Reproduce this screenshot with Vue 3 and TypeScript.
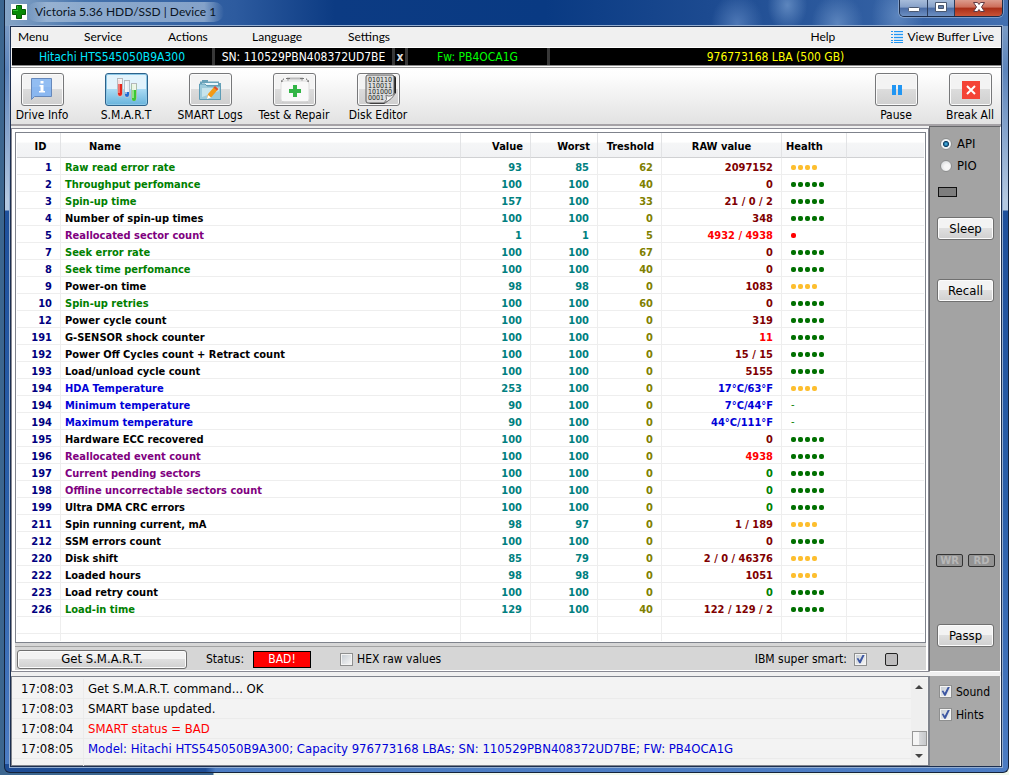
<script setup lang="ts">
import { ref } from 'vue'

type Tone = 'green' | 'black' | 'purple' | 'blue'
type RawTone = 'maroon' | 'red' | 'blue' | 'green'

interface Attribute {
  id: number
  name: string
  tone: Tone
  value: number
  worst: number
  threshold: number
  raw: string
  rawTone: RawTone
  health: number
}

const attr = (
  id: number, name: string, tone: Tone, value: number, worst: number,
  threshold: number, raw: string, rawTone: RawTone, health: number,
): Attribute => ({ id, name, tone, value, worst, threshold, raw, rawTone, health })

const attributes: Attribute[] = [
  attr(1, 'Raw read error rate', 'green', 93, 85, 62, '2097152', 'maroon', 4),
  attr(2, 'Throughput perfomance', 'green', 100, 100, 40, '0', 'maroon', 5),
  attr(3, 'Spin-up time', 'green', 157, 100, 33, '21 / 0 / 2', 'maroon', 5),
  attr(4, 'Number of spin-up times', 'black', 100, 100, 0, '348', 'maroon', 5),
  attr(5, 'Reallocated sector count', 'purple', 1, 1, 5, '4932 / 4938', 'red', 1),
  attr(7, 'Seek error rate', 'green', 100, 100, 67, '0', 'maroon', 5),
  attr(8, 'Seek time perfomance', 'green', 100, 100, 40, '0', 'maroon', 5),
  attr(9, 'Power-on time', 'black', 98, 98, 0, '1083', 'maroon', 4),
  attr(10, 'Spin-up retries', 'green', 100, 100, 60, '0', 'maroon', 5),
  attr(12, 'Power cycle count', 'black', 100, 100, 0, '319', 'maroon', 5),
  attr(191, 'G-SENSOR shock counter', 'black', 100, 100, 0, '11', 'red', 5),
  attr(192, 'Power Off Cycles count + Retract count', 'black', 100, 100, 0, '15 / 15', 'maroon', 5),
  attr(193, 'Load/unload cycle count', 'black', 100, 100, 0, '5155', 'maroon', 5),
  attr(194, 'HDA Temperature', 'blue', 253, 100, 0, '17°C/63°F', 'blue', 4),
  attr(194, 'Minimum temperature', 'blue', 90, 100, 0, '7°C/44°F', 'blue', 0),
  attr(194, 'Maximum temperature', 'blue', 90, 100, 0, '44°C/111°F', 'blue', 0),
  attr(195, 'Hardware ECC recovered', 'black', 100, 100, 0, '0', 'maroon', 5),
  attr(196, 'Reallocated event count', 'purple', 100, 100, 0, '4938', 'red', 5),
  attr(197, 'Current pending sectors', 'purple', 100, 100, 0, '0', 'green', 5),
  attr(198, 'Offline uncorrectable sectors count', 'purple', 100, 100, 0, '0', 'green', 5),
  attr(199, 'Ultra DMA CRC errors', 'black', 100, 100, 0, '0', 'green', 5),
  attr(211, 'Spin running current, mA', 'black', 98, 97, 0, '1 / 189', 'maroon', 4),
  attr(212, 'SSM errors count', 'black', 100, 100, 0, '0', 'maroon', 5),
  attr(220, 'Disk shift', 'black', 85, 79, 0, '2 / 0 / 46376', 'maroon', 4),
  attr(222, 'Loaded hours', 'black', 98, 98, 0, '1051', 'maroon', 4),
  attr(223, 'Load retry count', 'black', 100, 100, 0, '0', 'green', 5),
  attr(226, 'Load-in time', 'green', 129, 100, 40, '122 / 129 / 2', 'maroon', 5),
]

const log = [
  { time: '17:08:03', text: 'Get S.M.A.R.T. command... OK', tone: 'black' },
  { time: '17:08:03', text: 'SMART base updated.', tone: 'black' },
  { time: '17:08:04', text: 'SMART status = BAD', tone: 'red' },
  { time: '17:08:05', text: 'Model: Hitachi HTS545050B9A300; Capacity 976773168 LBAs; SN: 110529PBN408372UD7BE; FW: PB4OCA1G', tone: 'blue' },
]

const menus = ['Menu', 'Service', 'Actions', 'Language', 'Settings', 'Help']
const mode = ref<'API' | 'PIO'>('API')
const hex = ref(false)
const superSmart = ref(true)
const sound = ref(true)
const hints = ref(true)
</script>

<template>
  <div class="desktop">
    <div class="window">
      <header class="titlebar">
        <svg class="logo" viewBox="0 0 16 16" aria-hidden="true">
          <path d="M0 0H16V16H0z" fill="#fff" />
          <path d="M5.500 1.500h5v4h4v5h-4v4h-5v-4h-4v-5h4z" fill="#078a07" stroke="#045c04" />
          <path d="M6 2h1v4H2v1h5z" fill="#35c235" />
        </svg>
        <h1 class="title">Victoria 5.36 HDD/SSD | Device 1</h1>
        <div class="winbuttons">
          <button class="wb min" type="button" aria-label="Minimize">
            <svg viewBox="0 0 14 12"><rect x="1.500" y="6.500" width="11" height="4" rx="1" fill="#fff" stroke="#4a5870" /></svg>
          </button>
          <button class="wb max" type="button" aria-label="Maximize">
            <svg viewBox="0 0 14 12"><path d="M1.500 1.500h11v9h-11z" fill="#fff" stroke="#4a5870" /><path d="M4.500 4.500h5v3h-5z" fill="#6580aa" stroke="#4a5870" /></svg>
          </button>
          <button class="wb close" type="button" aria-label="Close">
            <svg viewBox="0 0 14 12"><path d="M1.500 1.500h4L7 3.500l1.500-2h4L9.500 6l3 4.500h-4L7 8.500l-1.500 2h-4L4.500 6z" fill="#fff" stroke="#613a43" /></svg>
          </button>
        </div>
      </header>

      <div class="client">
        <nav class="menubar">
          <button v-for="m in menus" :key="m" type="button" class="menu">{{ m }}</button>
          <button type="button" class="menu live">
            <svg viewBox="0 0 12 12" aria-hidden="true"><path d="M0 .5h2M3 .5h9M0 3.500h2M3 3.500h9M0 6.500h2M3 6.500h9M0 9.500h2M3 9.500h9M0 11.500h2M3 11.500h9" stroke="#2196f3" /><path d="M3 2h9M3 5h9M3 8h9" stroke="#a8d6fb" /></svg>
            View Buffer Live
          </button>
        </nav>

        <div class="strip">
          <span class="cell model">Hitachi HTS545050B9A300</span>
          <span class="cell serial">SN: 110529PBN408372UD7BE</span>
          <button class="cell clear" type="button">x</button>
          <span class="cell fw">Fw: PB4OCA1G</span>
          <span class="cell lba">976773168 LBA (500 GB)</span>
        </div>

        <div class="toolbar">
          <button class="tool" type="button">
            <span class="face">
              <svg viewBox="0 0 41 31"><path d="M9.500 4.500h20v18h-17l-3 3z" fill="#8ab7f0" stroke="#6688bb" /><path d="M10 5h19v8H10z" fill="#92bdf2" /><path d="M18.500 7h3v2.500h-3zM17.500 11h4v6h1.500v1.500h-6V17h1.500v-4.500h-1z" fill="#fff" /></svg>
            </span>
            <span class="caption">Drive Info</span>
          </button>
          <button class="tool active" type="button">
            <span class="face">
              <svg viewBox="0 0 41 31">
                <path d="M11.500 5v15a2.500 2.500 0 0 0 5 0V5" fill="#f5f5f5" stroke="#b9bec3" /><path d="M12 10h4v10a2 2 0 0 1-4 0z" fill="#e8251c" /><path d="M13 6v13" stroke="#fbc5c5" />
                <path d="M18.500 7v14a2.500 2.500 0 0 0 5 0V7" fill="#e9eff5" stroke="#b3bfcc" /><path d="M19 18h4v3a2 2 0 0 1-4 0z" fill="#1f6bd4" /><path d="M20 8v12" stroke="#fff" />
                <path d="M25.500 10v14a2.500 2.500 0 0 0 5 0V10" fill="#eff5e9" stroke="#a8bfa8" /><path d="M26 16h4v9a2 2 0 0 1-4 0z" fill="#3cc832" /><path d="M27 11v13" stroke="#e0fad9" />
                <path d="M11 4.500h6M18 6.500h6M25 9.500h6" stroke="#b5b8bc" />
              </svg>
            </span>
            <span class="caption">S.M.A.R.T</span>
          </button>
          <button class="tool" type="button">
            <span class="face">
              <svg viewBox="0 0 41 31"><path d="M10 9V7.500h2V6h6v1.500h11V9h2v17H10z" fill="#69a2b9" /><path d="M12 12h17l1.500 1.500V24H12z" fill="#b4d9e5" /><path d="M12 9h16v2H12z" fill="#e7f5fa" /><path d="M9.500 10v15.500h21V12H17l-2-2z" fill="#9dcbdb" stroke="#5e9cb5" /><path d="M12 14h17v3L12 23z" fill="#c6e4ec" /><path d="M17 24l1-4 6-7 3.500 3-6 7z" fill="#f39a16" /><path d="M17 25l1-4 3 2.500z" fill="#fff" /><path d="M23.500 13.500l1.500-1.500 3.500 3-1.500 1.500z" fill="#de4e31" /></svg>
            </span>
            <span class="caption">SMART Logs</span>
          </button>
          <button class="tool" type="button">
            <span class="face">
              <svg viewBox="0 0 41 31"><path d="M14 7V4.500h14V7" fill="none" stroke="#bbb" stroke-width="2" /><rect x="7" y="7" width="28" height="21" rx="3" fill="#f9f9f9" stroke="#ddd" /><path d="M12 4.500h4M26 4.500h4" stroke="#777" /><path d="M8 8q-1-2 2-3M34 8q1-2-2-3" stroke="#444" stroke-dasharray="2 1" fill="none" /><path d="M19 11h4v4h4v4h-4v4h-4v-4h-4v-4h4z" fill="#32b546" /><path d="M8 28h26" stroke="#c4c4c4" /></svg>
            </span>
            <span class="caption">Test &amp; Repair</span>
          </button>
          <button class="tool" type="button">
            <span class="face">
              <svg viewBox="0 0 41 31"><path d="M12 2h24q2 0 2 2v15L26 30H13q-2 0-2-2V4q0-2 2-2z" fill="#222" /><path d="M10 1h24q2 0 2 2v16q0 4-9 10H10q-2 0-2-2V3q0-2 2-2z" fill="#dcdcdc" stroke="#5c5c5c" /><text class="bits" x="10" y="8">010110</text><text class="bits" x="10" y="14">110011</text><text class="bits" x="10" y="20">101000</text><text class="bits" x="10" y="26">0001</text><path d="M26 29q4-3 2-8 4 3 9-2-2 6-11 10z" fill="#f5f5f5" stroke="#777" /></svg>
            </span>
            <span class="caption">Disk Editor</span>
          </button>
          <span class="grow"></span>
          <button class="tool" type="button">
            <span class="face">
              <svg viewBox="0 0 41 31"><path d="M16 11h4v10h-4zM22 11h4v10h-4z" fill="#2196f3" /></svg>
            </span>
            <span class="caption">Pause</span>
          </button>
          <button class="tool last" type="button">
            <span class="face">
              <svg viewBox="0 0 41 31"><path d="M12 7h18v18H12z" fill="#f44336" /><path d="M17 12l8 8M25 12l-8 8" stroke="#fff" stroke-width="2" /></svg>
            </span>
            <span class="caption">Break All</span>
          </button>
        </div>

        <div class="main">
          <section class="panel">
            <div class="sheet">
              <table class="smart">
                <colgroup>
                  <col class="c-id"><col class="c-name"><col class="c-value"><col class="c-worst">
                  <col class="c-threshold"><col class="c-raw"><col class="c-health"><col>
                </colgroup>
                <thead>
                  <tr>
                    <th class="h-id">ID</th>
                    <th class="h-name">Name</th>
                    <th class="h-num">Value</th>
                    <th class="h-num">Worst</th>
                    <th class="h-num">Treshold</th>
                    <th>RAW value</th>
                    <th class="h-health">Health</th>
                    <th></th>
                  </tr>
                </thead>
                <tbody>
                  <tr v-for="(a, i) in attributes" :key="i">
                    <td class="num navy">{{ a.id }}</td>
                    <td :class="a.tone">{{ a.name }}</td>
                    <td class="num teal">{{ a.value }}</td>
                    <td class="num teal">{{ a.worst }}</td>
                    <td class="num olive">{{ a.threshold }}</td>
                    <td class="num" :class="a.rawTone">{{ a.raw }}</td>
                    <td class="health">
                      <span v-if="a.health" class="dots" :class="{ warn: a.health === 4, bad: a.health === 1 }">
                        <i v-for="n in a.health" :key="n"></i>
                      </span>
                      <span v-else class="none">-</span>
                    </td>
                    <td></td>
                  </tr>
                  <tr><td v-for="n in 8" :key="n"></td></tr>
                  <tr class="tail"><td v-for="n in 8" :key="n"></td></tr>
                </tbody>
              </table>
            </div>
            <div class="statusbar">
              <button class="btn get" type="button">Get S.M.A.R.T.</button>
              <span class="status-label">Status:</span>
              <strong class="bad-flag">BAD!</strong>
              <label class="check hex"><input v-model="hex" type="checkbox">HEX raw values</label>
              <span class="grow"></span>
              <label class="check">IBM super smart:<input v-model="superSmart" type="checkbox"></label>
              <span class="lamp"></span>
            </div>
          </section>

          <aside class="side">
            <label class="radio"><input v-model="mode" type="radio" name="mode" value="API">API</label>
            <label class="radio"><input v-model="mode" type="radio" name="mode" value="PIO">PIO</label>
            <span class="led"></span>
            <button class="btn sleep" type="button">Sleep</button>
            <button class="btn recall" type="button">Recall</button>
            <div class="rw"><span>WR</span><span>RD</span></div>
            <button class="btn passp" type="button">Passp</button>
          </aside>
        </div>

        <div class="bottom">
          <section class="log">
            <table class="entries">
              <tbody>
                <tr v-for="(l, i) in log" :key="i">
                  <td class="time">{{ l.time }}</td>
                  <td :class="l.tone">{{ l.text }}</td>
                </tr>
                <tr class="rest"><td class="time"></td><td></td></tr>
              </tbody>
            </table>
            <div class="scroll">
              <svg viewBox="0 0 8 5"><path d="M4 0l4 4H0z" fill="#444" /></svg>
              <span class="thumb"></span>
              <svg viewBox="0 0 8 5"><path d="M4 4L0 0h8z" fill="#444" /></svg>
            </div>
          </section>
          <aside class="options">
            <label class="check"><input v-model="sound" type="checkbox">Sound</label>
            <label class="check"><input v-model="hints" type="checkbox">Hints</label>
          </aside>
        </div>
      </div>
    </div>
  </div>
</template>

<style>
body {
  margin: 0;
  background: #3c668f;
}
</style>

<style scoped>
* {
  box-sizing: border-box;
}
.desktop {
  min-height: 100vh;
  display: flex;
  padding: 0 0 2px 4px;
  font: 12px/16px "DejaVu Sans Condensed", "Noto Sans", sans-serif;
  color: #000;
  background: linear-gradient(90deg, #3c668f 213px, #f0f8ec 214px);
}
button {
  font: inherit;
  color: inherit;
  border: 0;
  padding: 0;
  background: none;
  white-space: nowrap;
}
.grow {
  flex: 1;
}
.window {
  flex: 1;
  min-width: 0;
  display: flex;
  flex-direction: column;
  border: 1px solid #14233c;
  border-top: 0;
  border-radius: 0 0 6px 6px;
  padding: 0 6px 5px 5px;
  background:
    linear-gradient(90deg, #1e4c94 20%, transparent 21%) 0 100% / 100% 8px no-repeat,
    linear-gradient(#8ca8ca 0, #5c84bb 70px, #b4c8e0 200px, #b4c8e0 210px, #1f509b 211px, #2a5fa9 500px, #4c7cc3);
}
.titlebar {
  flex: none;
  height: 26px;
  margin: 0 -6px 0 -5px;
  padding: 0 5px;
  display: flex;
  align-items: flex-start;
  background:
    radial-gradient(ellipse 26px 30px at 73% 90%, #4d77b5 0, transparent 100%),
    radial-gradient(ellipse 20px 26px at 78% 20%, #5d86be 0, transparent 100%),
    radial-gradient(ellipse 26px 30px at 83% 90%, #5b84bd 0, transparent 100%),
    radial-gradient(ellipse 26px 36px at 89% 60%, #5b84bd 0, transparent 100%),
    linear-gradient(90deg, #86a5c6 0, #4673ac 80px, #2d5b9f 230px, #0c3b83 330px, #093a83 540px, #1c4a90 700px, #426fb0 100%);
}
.logo {
  width: 16px;
  height: 16px;
  margin: 4px 0 0 1px;
}
.title {
  margin: 2px 0 0;
  padding: 0 8px;
  font: 12px/20px Lato, "Noto Sans", sans-serif;
  color: #0a1424;
  white-space: nowrap;
  border-radius: 10px;
  background: linear-gradient(90deg, #b5c9e000, #b5c9e0a0 10%, #b5c9e0a0 90%, #b5c9e000);
}
.winbuttons {
  margin-left: auto;
  height: 17px;
  display: flex;
  border: 1px solid #1c2c49;
  border-top: 0;
  border-radius: 0 0 5px 5px;
  overflow: hidden;
  box-shadow: 0 0 0 1px #a9bedb90;
}
.wb {
  width: 28px;
  display: flex;
  justify-content: center;
  border-right: 1px solid #293c5c;
  background: linear-gradient(#a7bcda 0, #86a1c9 45%, #4a6ca5 50%, #6c8fc2 100%);
}
.wb svg {
  width: 14px;
  height: 12px;
  margin-top: 1px;
}
.max {
  width: 27px;
}
.close {
  width: 47px;
  border-right: 0;
  background: linear-gradient(#dc9c8d 0, #cd6d59 45%, #a82e18 50%, #c95336 100%);
}
.client {
  flex: 1;
  display: flex;
  flex-direction: column;
  border: 1px solid #1c2f50;
  background: #f0f0f0;
  box-shadow: 0 0 0 1px #93add0;
}
.menubar {
  display: grid;
  grid-template-columns: 66px 84px 84px 96px 1fr 81px auto;
  height: 21px;
  padding: 0 7px;
  border-bottom: 1px solid #fff;
  font: 12px/19px Lato, "Noto Sans", sans-serif;
}
.menu {
  text-align: left;
  line-height: 18px;
}
.live {
  display: flex;
  align-items: center;
  gap: 4px;
}
.live svg {
  width: 12px;
  height: 12px;
}
.strip {
  height: 18px;
  display: flex;
  margin-left: 1px;
  background: #000;
  line-height: 18px;
  border-bottom: 1px solid #8d8d8d;
}
.cell {
  text-align: center;
  white-space: nowrap;
  border-right: 3px solid #383838;
}
.model {
  width: 203px;
  color: #00e8ff;
}
.serial {
  width: 180px;
  color: #fff;
}
.clear {
  width: 13px;
  color: #ddd;
  font-weight: bold;
  line-height: 16px;
}
.fw {
  width: 142px;
  color: #0f0;
}
.lba {
  flex: 1;
  color: #ff0;
  border-right: 0;
}
.toolbar {
  display: flex;
  gap: 22px;
  height: 60px;
  padding-top: 6px;
  border-top: 1px solid #fff;
  border-bottom: 2px solid #a5a2a6;
  box-shadow: inset 0 1px #999;
  background: linear-gradient(#fff, #fdfdfd 15%, #e2e2e2);
}
.tool {
  width: 62px;
  display: flex;
  flex-direction: column;
  align-items: center;
}
.last {
  margin-left: -10px;
}
.face {
  width: 43px;
  height: 33px;
  border: 1px solid #77787a;
  border-radius: 3px;
  box-shadow: inset 0 0 0 1px #fbfbfb;
  background: linear-gradient(#f3f3f3 48%, #dcdcdc 50%, #cfcfcf);
}
.active .face {
  border-color: #2c628b;
  box-shadow: inset 0 0 0 1px #8cc7e6;
  background: linear-gradient(#e2f3fc 48%, #a9daf3 50%, #68b3dc);
}
.face svg {
  display: block;
  width: 41px;
  height: 31px;
}
.bits {
  font: 7px "DejaVu Sans Condensed", sans-serif;
  fill: #222;
}
.caption {
  margin-top: 1px;
}
.main {
  flex: 1;
  display: flex;
}
.panel {
  flex: 1;
  min-width: 0;
  margin-top: 2px;
  display: flex;
  flex-direction: column;
  padding: 3px 2px 1px 3px;
  border: 1px solid #888993;
  background: #fff;
}
.sheet {
  flex: 1;
  border: 1px solid #7f838c;
  padding: 0 1px;
  background: #fff;
}
.smart {
  width: 100%;
  table-layout: fixed;
  border-collapse: separate;
  border-spacing: 0;
  font: bold 11px/12px "DejaVu Sans Condensed", "Noto Sans", sans-serif;
}
.c-id { width: 44px; }
.c-name { width: 400px; }
.c-value { width: 70px; }
.c-worst { width: 67px; }
.c-threshold { width: 64px; }
.c-raw { width: 120px; }
.c-health { width: 65px; }
.smart th {
  height: 25px;
  padding: 4px 5px 0;
  border-right: 1px solid #e2e3e5;
  border-bottom: 1px solid #d0d1d3;
  background: linear-gradient(#fff 38%, #f5f6f7 42%, #f1f2f4);
  white-space: nowrap;
}
.smart .h-id {
  padding-left: 9px;
}
.smart .h-name {
  text-align: left;
  padding-left: 28px;
}
.smart .h-num {
  text-align: right;
  padding-right: 7px;
}
.smart .h-health {
  text-align: left;
  padding-left: 4px;
}
.smart td {
  height: 17px;
  padding: 4px 4px 0;
  border-right: 1px solid #eee;
  border-bottom: 1px solid #eee;
  white-space: nowrap;
}
.smart th:last-child,
.smart td:last-child {
  border-right: 0;
}
.smart .num {
  text-align: right;
  padding-right: 8px;
}
.smart .tail td {
  height: 7px;
  border-bottom: 0;
}
.green { color: #008000; }
.black { color: #000; }
.purple { color: #800080; }
.blue { color: #0000d8; }
.navy { color: #000080; }
.teal { color: #008080; }
.olive { color: #808000; }
.maroon { color: #800000; }
.red { color: #f00; }
.smart .health {
  padding: 2px 0 0 9px;
}
.dots {
  display: flex;
  gap: 2px;
  color: #007000;
}
.warn { color: #fdbe2e; }
.bad { color: #f00; }
.dots i {
  width: 5px;
  height: 5px;
  border-radius: 2px;
  background: currentColor;
}
.none {
  color: #008000;
  font-weight: normal;
}
.statusbar {
  height: 27px;
  display: flex;
  align-items: center;
  padding: 5px 28px 0 2px;
  background: linear-gradient(#d6d6d6 3px, #a2a2a2 3px, #a2a2a2 4px, #d6d6d6 4px);
}
.btn {
  height: 23px;
  border: 1px solid #707070;
  border-radius: 3px;
  box-shadow: inset 0 0 0 1px #fcfcfc;
  background: linear-gradient(#f3f3f3 48%, #dfdfdf 50%, #d0d0d0);
  font-size: 13px;
}
.get {
  width: 170px;
  height: 19px;
  line-height: 16px;
}
.status-label {
  margin-left: 19px;
}
.bad-flag {
  width: 58px;
  height: 17px;
  margin-left: 9px;
  border: 1px solid #000;
  background: #f00;
  color: #fff;
  font-weight: normal;
  line-height: 15px;
  text-align: center;
}
.check,
.radio {
  display: flex;
  align-items: center;
  gap: 4px;
  white-space: nowrap;
}
.check.hex {
  margin-left: 29px;
}
.check input {
  appearance: none;
  width: 13px;
  height: 13px;
  margin: 0;
  padding: 1px;
  border: 1px solid #8e8f8f;
  background: linear-gradient(135deg, #c9cfd5, #f4f4f4) content-box, #f4f4f4;
}
.statusbar .grow + .check {
  gap: 7px;
}
.check input:checked::after {
  content: "";
  display: block;
  width: 9px;
  height: 9px;
  background: #3d57a3;
  clip-path: polygon(8% 45%, 25% 38%, 42% 65%, 75% 0, 98% 0, 52% 98%, 36% 98%);
}
.lamp {
  width: 13px;
  height: 13px;
  margin-left: 18px;
  border: 1px solid #222;
  border-radius: 2px;
  background: #bdbcbd;
}
.side {
  width: 72px;
  padding: 6px 7px 24px;
  display: flex;
  flex-direction: column;
  align-items: flex-start;
  border-left: 1px solid #66676a;
  border-top: 1px solid #66676a;
  border-right: 1px solid #fff;
  border-bottom: 1px solid #fff;
  background: #a3a3a3;
}
.radio {
  height: 22px;
  gap: 5px;
  margin-left: 3px;
  font-size: 13px;
}
.radio input {
  appearance: none;
  width: 12px;
  height: 12px;
  margin: 0;
  border: 1px solid #8e8f8f;
  border-radius: 50%;
  background: radial-gradient(circle at 60% 60%, #f6f6f6 30%, #cdd0d3);
}
.radio input:checked {
  background: radial-gradient(circle, #55c7f5 0, #155c8b 30%, #10395a 38%, #eef2f4 48%);
}
.led {
  width: 19px;
  height: 10px;
  margin: 10px 0 0 1px;
  border: 1px solid #111;
  background: #7d7d7d;
}
.side .btn {
  width: 57px;
}
.sleep {
  margin-top: 20px;
}
.recall {
  margin-top: 39px;
}
.rw {
  width: 59px;
  display: flex;
  justify-content: space-between;
  margin: auto 0 57px -1px;
}
.rw span {
  width: 27px;
  height: 13px;
  border: 1px solid #333;
  border-radius: 2px;
  background: #939393;
  color: #b7b7b7;
  font: bold 10px/11px "DejaVu Sans", sans-serif;
  text-align: center;
}
.bottom {
  display: flex;
  height: 90px;
  margin-top: 4px;
}
.log {
  flex: 1;
  min-width: 0;
  display: flex;
  border: 1px solid #7f838c;
  padding: 2px 1px 0 0;
  background: #f3f3f3;
}
.entries {
  flex: 1;
  border-spacing: 0;
  font-size: 13px;
  line-height: 19px;
}
.entries td {
  height: 20px;
  padding: 0 0 0 4px;
  border-bottom: 1px solid #ebebeb;
}
.entries .time {
  width: 72px;
  padding-left: 9px;
  border-right: 1px solid #ebebeb;
}
.entries .rest td {
  height: 7px;
  border-bottom: 0;
}
.scroll {
  width: 16px;
  display: flex;
  flex-direction: column;
  align-items: center;
  padding: 6px 0 6px;
  background: #efefef;
}
.scroll svg {
  width: 8px;
  height: 5px;
}
.thumb {
  width: 15px;
  height: 15px;
  margin: auto 0 8px;
  border: 1px solid #979797;
  background: linear-gradient(90deg, #f5f5f5 45%, #d8d9db 50%, #c6c8cb);
}
.options {
  width: 72px;
  padding: 4px 0 0 9px;
  border-left: 1px solid #7f838c;
  border-right: 1px solid #fff;
  background: #a8a8a8;
}
.options .check {
  height: 23px;
}
</style>
